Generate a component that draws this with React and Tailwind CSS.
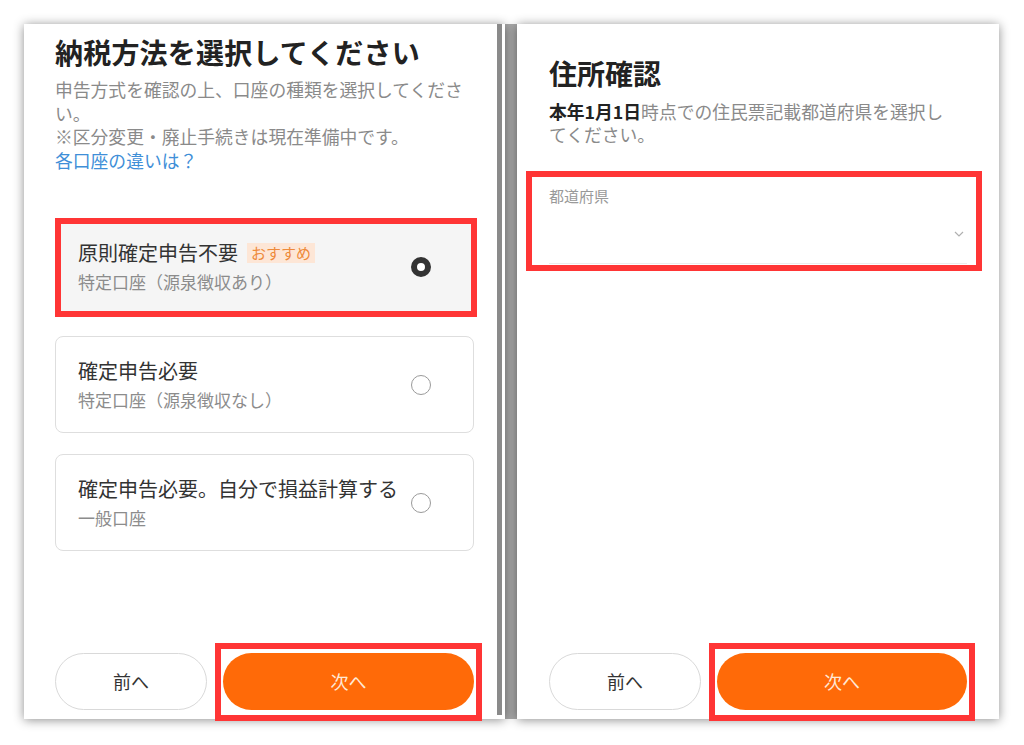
import React from "react";

const OPTIONS = [
  { id: 1, title: "原則確定申告不要", sub: "特定口座（源泉徴収あり）", badge: "おすすめ", selected: true },
  { id: 2, title: "確定申告必要", sub: "特定口座（源泉徴収なし）" },
  { id: 3, title: "確定申告必要。自分で損益計算する", sub: "一般口座" },
];

function Radio({ checked }) {
  return checked ? (
    <span className="w-[20px] h-[20px] rounded-full border-[6px] border-[#333] bg-white shrink-0" />
  ) : (
    <span className="w-[20px] h-[20px] rounded-full border-[1.5px] border-[#9a9a9a] bg-white shrink-0" />
  );
}

function Highlight({ className }) {
  return <div className={`absolute border-[6px] border-[#ff3535] pointer-events-none ${className}`} />;
}

function Buttons() {
  return (
    <div className="mt-auto flex gap-[16px]">
      <button className="w-[152px] h-[57px] rounded-full border border-[#d9d9d9] bg-white text-[18px] text-[#333]">
        前へ
      </button>
      <div className="relative flex-1">
        <button className="w-full h-[57px] rounded-full bg-[#ff6a08] text-[18px] text-[#ffe8d6]">次へ</button>
        <Highlight className="-left-[8px] -right-[8px] -top-[10px] -bottom-[11px]" />
      </div>
    </div>
  );
}

export default function App() {
  return (
    <div className="w-[1024px] h-[745px] bg-white pl-[24px] pt-[24px] flex font-['Noto_Sans_CJK_JP',sans-serif]">
      {/* Left: tax method */}
      <div className="relative z-10 w-[481px] h-[695px] bg-white shadow-[0_1px_10px_rgba(0,0,0,0.45)] flex flex-col px-[31px] pt-[10px] pb-[9px]">
        <h1 className="text-[28px] leading-[36px] font-bold text-[#222] tracking-[0.2px]">納税方法を選択してください</h1>
        <p className="mt-[8px] text-[17.8px] leading-[23.5px] text-[#8a8a8a]">
          申告方式を確認の上、口座の種類を選択してくださ
          <br />
          い。
          <br />
          ※区分変更・廃止手続きは現在準備中です。
        </p>
        <a className="text-[17.8px] leading-[23.5px] text-[#3f8fd8]">各口座の違いは？</a>

        <div className="mt-[46px] flex flex-col gap-[21px]">
          {OPTIONS.map((o) => (
            <div
              key={o.id}
              className={`relative h-[97px] rounded-[8px] border pl-[22px] pr-[42px] flex items-center gap-[8px] ${
                o.selected ? "bg-[#f5f5f5] border-[#e6e6e6]" : "bg-white border-[#dedede]"
              }`}
            >
              <div className="flex-1">
                <div className="flex items-center">
                  <span className="text-[20px] leading-[28px] text-[#333] whitespace-nowrap">{o.title}</span>
                  {o.badge && (
                    <span className="ml-[9px] px-[4px] h-[20px] flex items-center bg-[#fde6d6] text-[15px] text-[#ee8a3a]">
                      {o.badge}
                    </span>
                  )}
                </div>
                <div className="mt-[3px] text-[17px] leading-[24px] text-[#8c8c8c]">{o.sub}</div>
              </div>
              <Radio checked={o.selected} />
              {o.selected && <Highlight className="-left-[1px] -right-[4px] -top-[1px] -bottom-[3px]" />}
            </div>
          ))}
        </div>

        <Buttons />
        <div className="absolute right-[3px] top-0 bottom-[4px] w-[5px] bg-[#8a8a8a]" />
      </div>

      <div className="w-[12px] h-[695px] bg-[#aaaaaa]" />

      {/* Right: address */}
      <div className="relative w-[482px] h-[695px] bg-white shadow-[0_1px_10px_rgba(0,0,0,0.45)] flex flex-col px-[32px] pt-[31px] pb-[9px]">
        <h1 className="text-[28px] leading-[36px] font-bold text-[#222]">住所確認</h1>
        <p className="mt-[9px] text-[17.8px] leading-[23px] text-[#8a8a8a] whitespace-nowrap">
          <span className="font-bold text-[#222]">本年1月1日</span>時点での住民票記載都道府県を選択し
          <br />
          てください。
        </p>

        <div className="relative mt-[40px]">
          <div className="text-[15px] leading-[20px] text-[#999]">都道府県</div>
          <div className="h-[58px] border-b border-[#ececec] flex items-center justify-end pr-[3px] pb-[2px]">
            <svg width="10" height="6" viewBox="0 0 10 6" fill="none" stroke="#b0b0b0" strokeWidth="1.2">
              <path d="M1 1l4 4 4-4" />
            </svg>
          </div>
          <Highlight className="-left-[23px] -right-[15px] -top-[15px] -bottom-[7px]" />
        </div>

        <Buttons />
      </div>
    </div>
  );
}
